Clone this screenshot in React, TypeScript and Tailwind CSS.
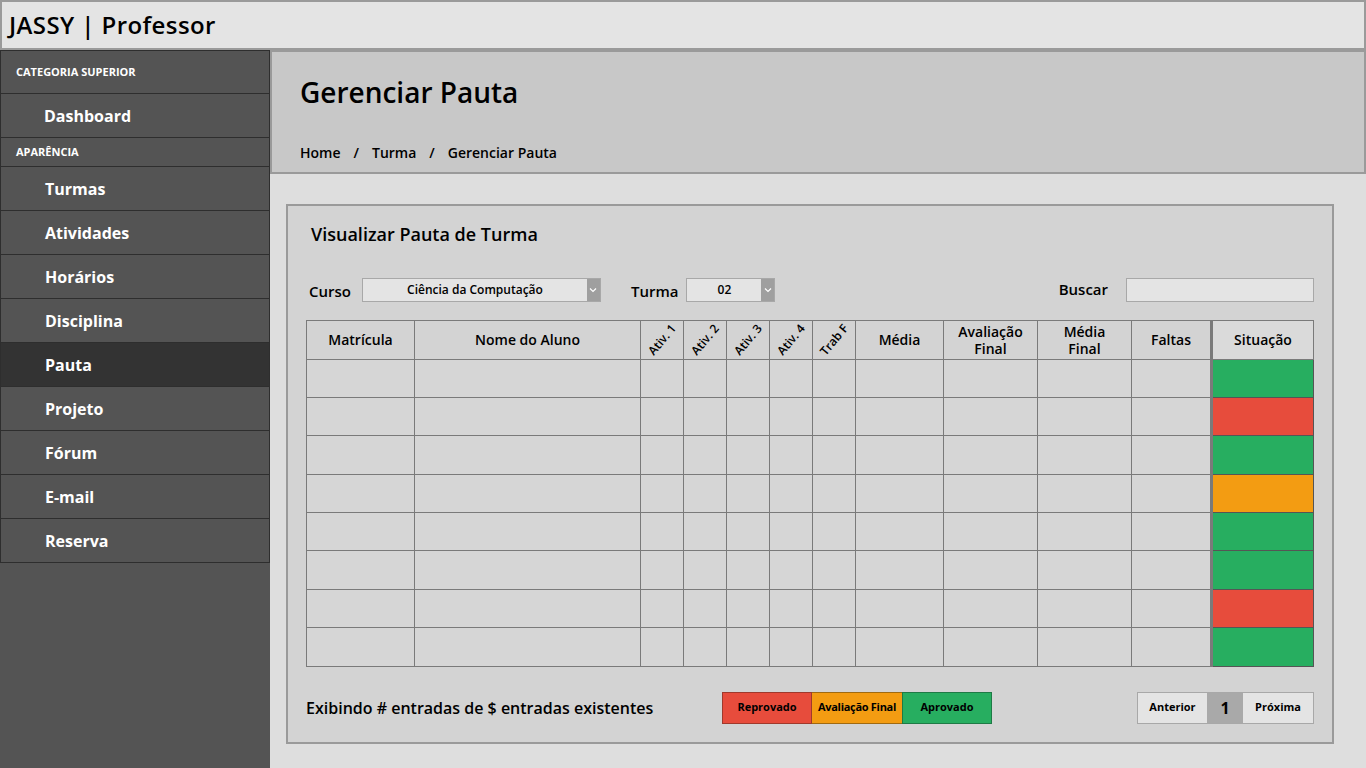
import React from "react";

const font = { fontFamily: "'Open Sans', Lato, sans-serif" };

const menu = [
  { label: "Turmas" },
  { label: "Atividades" },
  { label: "Horários" },
  { label: "Disciplina" },
  { label: "Pauta", active: true },
  { label: "Projeto" },
  { label: "Fórum" },
  { label: "E-mail" },
  { label: "Reserva" },
];

const status = ["g", "r", "g", "o", "g", "g", "r", "g"];

const statusBg: Record<string, string> = {
  g: "bg-[#27ae60]",
  r: "bg-[#e74c3c]",
  o: "bg-[#f39c12]",
};

const cols = [108, 226, 43, 43, 43, 43, 43, 88, 94, 94, 80];

const Chevron = () => (
  <svg width="8" height="6" viewBox="0 0 8 6" className="text-white">
    <path d="M1 1.5 L4 4.5 L7 1.5" fill="none" stroke="currentColor" strokeWidth="1.2" />
  </svg>
);

const Select: React.FC<{ value: string; width: string }> = ({ value, width }) => (
  <div className={`flex h-[24px] border border-[#a8a8a8] bg-[#e4e4e4] ${width}`}>
    <div className="flex flex-1 items-center justify-center text-[12px] font-semibold text-black">
      {value}
    </div>
    <div className="flex w-[13px] items-center justify-center bg-[#9f9f9f]">
      <Chevron />
    </div>
  </div>
);

export default function App() {
  return (
    <div style={font} className="flex h-[768px] w-[1366px] flex-col overflow-hidden bg-[#dedede]">
      <header className="flex h-[50px] items-center border-2 border-[#9a9a9a] bg-[#e4e4e4] pl-[7px]">
        <h1 className="text-[24px] font-semibold tracking-[0.4px] text-black">JASSY | Professor</h1>
      </header>

      <div className="flex flex-1">
        <aside className="w-[270px] bg-[#545454] text-white">
          <div className="flex h-[44px] items-center border border-[#2e2e2e] pl-[15px] text-[11px] font-bold uppercase">
            Categoria Superior
          </div>
          <div className="flex h-[44px] items-center border border-t-0 border-[#2e2e2e] pl-[43px] text-[16px] font-bold">
            Dashboard
          </div>
          <div className="flex h-[29px] items-center border border-t-0 border-[#2e2e2e] pl-[15px] text-[11px] font-bold uppercase">
            Aparência
          </div>
          {menu.map((m) => (
            <div
              key={m.label}
              className={`flex h-[44px] items-center border border-t-0 border-[#2e2e2e] pl-[44px] text-[16px] font-bold ${
                m.active ? "bg-[#333333]" : ""
              }`}
            >
              {m.label}
            </div>
          ))}
        </aside>

        <main className="flex flex-1 flex-col">
          <div className="h-[124px] border-2 border-[#9a9a9a] bg-[#c8c8c8] pl-[28px]">
            <h2 className="mt-[19px] text-[28px] font-semibold text-black">Gerenciar Pauta</h2>
            <div className="mt-[29px] flex gap-[13px] text-[14px] font-semibold text-black">
              <span>Home</span>
              <span>/</span>
              <span>Turma</span>
              <span>/</span>
              <span>Gerenciar Pauta</span>
            </div>
          </div>

          <section className="ml-[16px] mt-[30px] h-[540px] w-[1048px] border-2 border-[#9a9a9a] bg-[#d3d3d3] px-[18px]">
            <h3 className="mt-[15px] pl-[5px] text-[18px] font-semibold text-black">
              Visualizar Pauta de Turma
            </h3>

            <div className="mt-[30px] flex items-center text-[15px] font-semibold text-black">
              <span className="mt-[2px] pl-[3px]">Curso</span>
              <div className="ml-[11px]">
                <Select value="Ciência da Computação" width="w-[239px]" />
              </div>
              <span className="ml-[30px] mt-[2px]">Turma</span>
              <div className="ml-[8px]">
                <Select value="02" width="w-[89px]" />
              </div>
              <span className="ml-auto mr-[18px] -mt-[2px]">Buscar</span>
              <div className="h-[24px] w-[188px] border border-[#a8a8a8] bg-[#e4e4e4]" />
            </div>

            <table className="mt-[17px] border-collapse text-black" style={{ tableLayout: "fixed" }}>
              <colgroup>
                {cols.map((w, i) => (
                  <col key={i} style={{ width: w }} />
                ))}
                <col style={{ width: 102 }} />
              </colgroup>
              <thead>
                <tr className="h-[39px] text-[14px] font-semibold leading-[17px]">
                  <th className="border border-[#7a7a7a] font-semibold">Matrícula</th>
                  <th className="border border-[#7a7a7a] font-semibold">Nome do Aluno</th>
                  {["Ativ. 1", "Ativ. 2", "Ativ. 3", "Ativ. 4", "Trab F"].map((a) => (
                    <th key={a} className="overflow-hidden border border-[#7a7a7a] p-0 font-semibold">
                      <div className="flex h-[37px] items-center justify-center">
                        <span className="-rotate-[50deg] whitespace-nowrap text-[12px]">{a}</span>
                      </div>
                    </th>
                  ))}
                  <th className="border border-[#7a7a7a] font-semibold">Média</th>
                  <th className="border border-[#7a7a7a] p-0 font-semibold">
                    <div className="flex flex-col items-center leading-[17px]">
                      <span>Avaliação</span>
                      <span>Final</span>
                    </div>
                  </th>
                  <th className="border border-[#7a7a7a] p-0 font-semibold">
                    <div className="flex flex-col items-center leading-[17px]">
                      <span>Média</span>
                      <span>Final</span>
                    </div>
                  </th>
                  <th className="border border-[#7a7a7a] font-semibold">Faltas</th>
                  <th className="border border-[#7a7a7a] border-l-[3px] bg-[#dadada] font-semibold">
                    Situação
                  </th>
                </tr>
              </thead>
              <tbody>
                {status.map((s, r) => (
                  <tr key={r} className="h-[38.4px]">
                    {cols.map((_, c) => (
                      <td key={c} className="border border-[#7a7a7a] bg-[#d6d6d6]" />
                    ))}
                    <td className={`border border-[#555] border-l-[3px] border-l-[#7a7a7a] ${statusBg[s]}`} />
                  </tr>
                ))}
              </tbody>
            </table>

            <div className="mt-[25px] flex items-center">
              <span className="w-[416px] text-[16px] font-semibold text-black">
                Exibindo # entradas de $ entradas existentes
              </span>
              <div className="flex h-[32px] text-[11px] font-bold text-black">
                <div className="flex w-[90px] items-center justify-center border border-[#a0392c] bg-[#e74c3c]">
                  Reprovado
                </div>
                <div className="flex w-[90px] items-center justify-center whitespace-nowrap border-y border-[#a06a10] bg-[#f39c12] tracking-[-0.3px]">
                  Avaliação Final
                </div>
                <div className="flex w-[90px] items-center justify-center border border-[#1e7a45] bg-[#27ae60]">
                  Aprovado
                </div>
              </div>
              <div className="ml-auto flex h-[32px] border border-[#a8a8a8] text-[11px] font-bold text-black">
                <div className="flex w-[69px] items-center justify-center bg-[#e4e4e4]">Anterior</div>
                <div className="flex w-[36px] items-center justify-center bg-[#a9a9a9] text-[16px]">1</div>
                <div className="flex w-[70px] items-center justify-center bg-[#e4e4e4]">Próxima</div>
              </div>
            </div>
          </section>
        </main>
      </div>
    </div>
  );
}
